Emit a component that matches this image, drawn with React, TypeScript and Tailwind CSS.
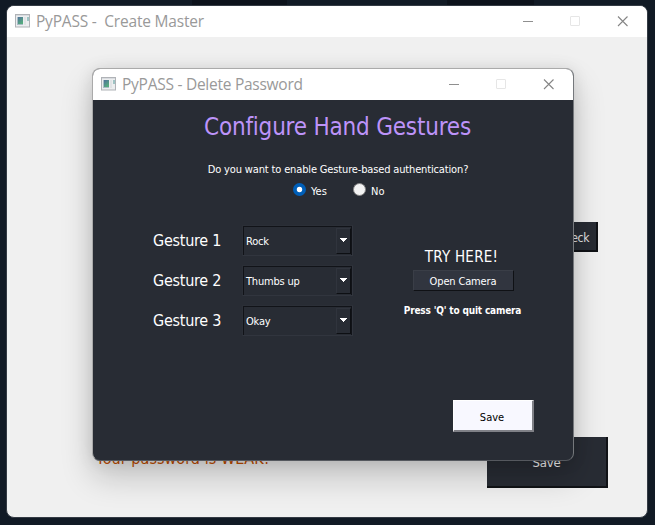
import React from "react";

const ui = "font-['DejaVu_Sans_Condensed','DejaVu_Sans',sans-serif] [font-stretch:condensed]";

function AppIcon() {
  return (
    <svg width="15" height="14" viewBox="0 0 15 14" className="shrink-0 -mt-px">
      <defs>
        <linearGradient id="pane" x1="0" y1="0" x2="0.6" y2="1">
          <stop offset="0" stopColor="#50709b" />
          <stop offset="1" stopColor="#55ad7d" />
        </linearGradient>
      </defs>
      <rect x="0.5" y="0.5" width="14" height="12.5" fill="#eceeef" stroke="#b0b3b7" />
      <rect x="1" y="1" width="13" height="1" fill="#d8dbdf" />
      <rect x="2" y="3" width="6" height="8" fill="#a9bcc6" />
      <rect x="3" y="3" width="5" height="7" fill="url(#pane)" />
      <rect x="9" y="3" width="2" height="8" fill="#e0e3e5" />
      <rect x="12" y="3" width="2" height="4" fill="#9fc4c4" />
    </svg>
  );
}

function TitleBar({ title, className }: { title: string; className: string }) {
  return (
    <div className="flex h-[31px] items-center bg-white pl-2 text-[#999]">
      <AppIcon />
      <span className={`ml-1.5 whitespace-pre font-['Open_Sans','Noto_Sans',sans-serif] [font-stretch:normal] text-[15.5px] leading-[30px] -mt-px ${className}`}>
        {title}
      </span>
      <svg width="106" height="11" viewBox="0 0 106 11" className="ml-auto mr-[18px] shrink-0" fill="none">
        <path d="M0 5.5h10" stroke="#8f8f8f" />
        <rect x="47.5" y="0.5" width="9" height="9" rx="0.5" stroke="#e6e6e6" />
        <path d="M95 0.5l9.5 9.5M104.5 0.5l-9.5 9.5" stroke="#858585" strokeWidth="1.1" />
      </svg>
    </div>
  );
}

function GestureRow({ label, value }: { label: string; value: string }) {
  return (
    <div className="flex h-[31px] items-center">
      <span className="w-[89px] text-[16px] leading-5 tracking-[-0.25px]">{label}</span>
      <div className="flex h-[31px] w-[111px] border border-t-[#2b2f37] border-l-[#2b2f37] border-r-[#31353e] border-b-[#31353e]">
        <div className="flex flex-1 border border-b-0 border-[#111318] pl-[2px]">
          <span className="flex-1 pt-[2px] text-[11px] leading-[25px] tracking-[-0.2px]">{value}</span>
          <span className="mb-px mt-px flex w-[15px] items-center justify-center border border-l-[#30343d] border-t-[#30343d] border-b-[#0d0f13] border-r-[#0d0f13]">
            <svg width="7" height="4" viewBox="0 0 7 4" className="-mt-[2px]" shapeRendering="crispEdges">
              <path d="M0 0h7v1H6v1H5v1H4v1H3V3H2V2H1V1H0z" fill="#fff" />
            </svg>
          </span>
        </div>
      </div>
    </div>
  );
}

function Radio({ label, checked }: { label: string; checked?: boolean }) {
  return (
    <label className="flex items-center gap-[5px] text-[11px] leading-4">
      <svg width="13" height="13" viewBox="0 0 13 13" className="-mt-[5px]">
        {checked ? (
          <>
            <circle cx="6.5" cy="6.5" r="6.5" fill="#005fb8" />
            <circle cx="6.5" cy="6.5" r="2.7" fill="#fff" />
          </>
        ) : (
          <circle cx="6.5" cy="6.5" r="6" fill="#f3f3f3" stroke="#868686" />
        )}
      </svg>
      {label}
    </label>
  );
}

function GestureDialog() {
  return (
    <div className="absolute left-[92px] top-[68px] h-[393px] w-[482px] overflow-hidden rounded-lg border border-[#aaa] border-b-[#55585e] border-r-[#75787c] bg-[#282c34] shadow-[0_16px_32px_rgba(0,0,0,0.2),0_1px_16px_rgba(0,0,0,0.1)]">
      <TitleBar title="PyPASS - Delete Password" className="tracking-[-0.26px]" />
      <div className="flex h-[360px] flex-col text-white">
        <h1 className="ml-[9px] mt-3 text-center text-[24px] leading-[30px] tracking-[-0.2px] text-[#bd93f9]">Configure Hand Gestures</h1>
        <p className="mt-5 pl-[10px] text-center text-[11px] leading-4 tracking-[-0.15px]">
          Do you want to enable Gesture-based authentication?
        </p>
        <div className="mt-[6px] flex h-4 pl-[200px]">
          <div className="w-[60px]"><Radio label="Yes" checked /></div>
          <Radio label="No" />
        </div>
        <div className="mt-[25px] flex pl-[60px]">
          <div className="flex w-[200px] flex-col gap-[9px]">
            <GestureRow label="Gesture 1" value="Rock" />
            <GestureRow label="Gesture 2" value="Thumbs up" />
            <GestureRow label="Gesture 3" value="Okay" />
          </div>
          <div className="ml-[40px] flex w-[139px] flex-col items-center pt-[22px]">
            <span className="-ml-[2px] text-[15px] leading-5 tracking-[0.25px]">TRY HERE!</span>
            <button className="ml-px mt-[3px] h-[21px] w-[101px] border border-l-[#3a3e47] border-t-[#3a3e47] border-b-[#0f1115] border-r-[#0f1115] bg-[#31353f] pt-px text-[11px] leading-[20px] tracking-[-0.15px]">
              Open Camera
            </button>
            <span className="mt-3 whitespace-nowrap text-[10px] font-bold leading-4 tracking-[-0.17px]">Press 'Q' to quit camera</span>
          </div>
        </div>
        <button className="ml-[360px] mt-[64px] h-8 w-[81px] border-b-2 border-r-2 border-l border-t border-b-[#808187] border-r-[#808187] border-l-white border-t-white bg-[#f8f8ff] pr-[2px] pt-[2px] text-[11px] leading-[29px] text-black">
          Save
        </button>
      </div>
    </div>
  );
}

export default function App() {
  return (
    <div className={`relative h-[525px] w-[655px] overflow-hidden bg-[#111a25] ${ui}`}>
      <div className="flex h-[5px]">
        <div className="ml-[192px] w-[95px] bg-[#0c121b]" />
        <div className="ml-[160px] w-[87px] bg-[#0c121b]" />
      </div>
      <div className="absolute left-[6px] top-[5px] h-[513px] w-[642px] overflow-hidden rounded-lg border border-[#343b44] bg-[#f0f0f0]">
        <TitleBar title="PyPASS -  Create Master" className="tracking-[-0.2px]" />
        <div className="flex h-[480px] flex-col items-end">
          <button className="mr-[49px] mt-[185px] h-[30px] w-[80px] border-b-2 border-r-2 border-[#101216] bg-[#282c34] pr-[7px] pt-[2px] text-right text-[12px] leading-7 tracking-[-0.4px] text-[#e5e5e5]">
            Check
          </button>
          <div className="mt-[185px] flex w-full justify-between pl-[89px] pr-[39px]">
            <span className="mt-[12px] text-[16px] leading-5 tracking-[0.05px] text-[#c24e00]">Your password is WEAK!</span>
            <button className="h-[51px] w-[121px] border-b-2 border-r-2 border-[#101216] bg-[#282c34] text-[13px] leading-[52px] tracking-[-0.2px] text-[#f4f4f4]">
              Save
            </button>
          </div>
        </div>
      </div>
      <GestureDialog />
    </div>
  );
}
